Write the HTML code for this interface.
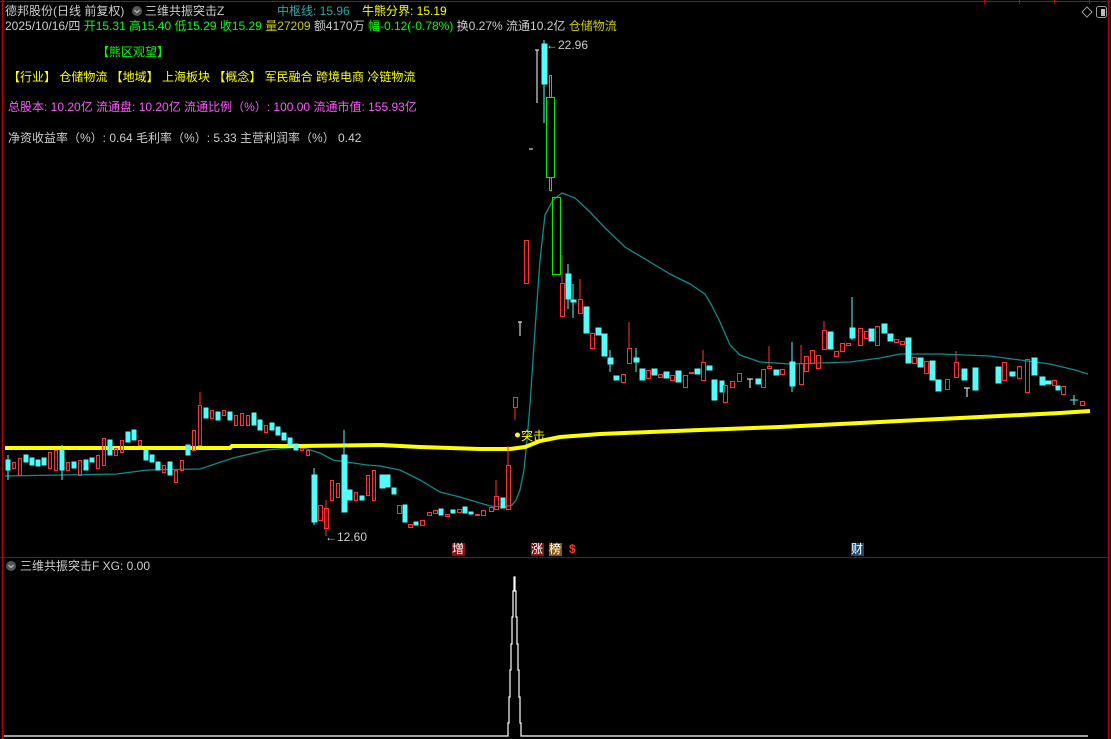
<!DOCTYPE html>
<html><head><meta charset="utf-8"><style>
html,body{margin:0;padding:0;background:#000;width:1111px;height:739px;overflow:hidden}
body{position:relative;font-family:"Liberation Sans","Noto Sans CJK SC",sans-serif;font-size:12px}
.t{position:absolute;white-space:nowrap;line-height:14px}
</style></head><body>
<svg width="1111" height="739" style="position:absolute;left:0;top:0">
<line x1="0" y1="1.5" x2="1111" y2="1.5" stroke="#c00000"/>
<line x1="2.5" y1="0" x2="2.5" y2="739" stroke="#c00000"/>
<line x1="1108.5" y1="0" x2="1108.5" y2="739" stroke="#c00000"/>
<line x1="0" y1="557.5" x2="1109" y2="557.5" stroke="#a00000"/>
<g stroke="#c00000"><line x1="984.5" y1="0" x2="984.5" y2="4"/><line x1="1019.5" y1="0" x2="1019.5" y2="4"/><line x1="1054.5" y1="0" x2="1054.5" y2="4"/><line x1="1089.5" y1="0" x2="1089.5" y2="4"/></g>
<path d="M1082 12 L1087 7 L1092 12 L1087 17 Z" fill="none" stroke="#999"/>
<rect x="1096.5" y="6.5" width="10" height="11" rx="2" fill="none" stroke="#999"/><rect x="1101" y="9" width="4" height="7" fill="#bbb"/>
<!-- MA line -->
<polyline fill="none" stroke="#0c8c8c" stroke-width="1.3" points="5,476 117,474 147,470 200,469 233,458 267,450 300,447 320,453 333,460 367,465 380,466 400,470 420,480 440,492 460,497 490,506 505,507 512,505 516,500 520,490 524,470 527,440 530,405 535,330 540,260 545,215 553,200 562,193 575,198 590,212 605,228 625,247 650,262 670,274 690,284 705,294 712,306 720,322 730,345 740,355 760,362 790,364 820,363 850,362 880,358 900,354 940,354 990,356 1020,360 1050,364 1075,370 1088,374"/>
<!-- yellow line -->
<polyline fill="none" stroke="#ffff00" stroke-width="4" points="5,448 230,448 232,446 300,446 380,445 420,447 480,449 510,449 525,447 540,441 560,437 600,434 650,432 700,430 780,427 860,423 960,418 1060,413 1090,411"/>
<g id="c" stroke-width="1">
<!-- cyan filled -->
<g fill="#54fcfc" stroke="#54fcfc">
<rect x="6" y="460" width="4" height="10"/><line x1="8" y1="455" x2="8" y2="480"/>
<rect x="24" y="455" width="4" height="7"/><rect x="30" y="458" width="4" height="7"/><rect x="36" y="460" width="4" height="6"/><rect x="42" y="458" width="4" height="7"/>
<rect x="60" y="450" width="4" height="20"/><line x1="62" y1="445" x2="62" y2="480"/>
<rect x="72" y="462" width="4" height="6"/><rect x="84" y="460" width="4" height="10"/><rect x="90" y="458" width="4" height="4"/>
<rect x="108" y="440" width="4" height="15"/><rect x="126" y="432" width="4" height="10"/><rect x="132" y="430" width="4" height="10"/>
<rect x="144" y="450" width="4" height="10"/><rect x="150" y="455" width="4" height="7"/><rect x="156" y="462" width="4" height="8"/>
<rect x="168" y="462" width="4" height="13"/><rect x="186" y="445" width="4" height="10"/>
<rect x="204" y="408" width="4" height="10"/><rect x="216" y="412" width="4" height="8"/><rect x="228" y="412" width="4" height="8"/>
<rect x="252" y="413" width="4" height="12"/><rect x="258" y="420" width="4" height="10"/><rect x="270" y="423" width="4" height="7"/>
<rect x="276" y="427" width="4" height="8"/><rect x="282" y="433" width="4" height="7"/><rect x="288" y="438" width="4" height="7"/><rect x="294" y="444" width="4" height="6"/>
<rect x="312" y="475" width="5" height="47"/><line x1="314" y1="468" x2="314" y2="525"/>
<rect x="342" y="455" width="5" height="57"/><line x1="344" y1="430" x2="344" y2="512"/>
<rect x="348" y="490" width="4" height="10"/><rect x="360" y="496" width="4" height="4"/>
<rect x="380" y="475" width="5" height="13"/><rect x="386" y="475" width="4" height="12"/><rect x="392" y="488" width="4" height="6"/>
<rect x="403" y="505" width="4" height="17"/><rect x="414" y="522" width="4" height="3"/><rect x="439" y="509" width="4" height="6"/>
<rect x="451" y="510" width="4" height="3"/><rect x="463" y="507" width="4" height="6"/><rect x="469" y="512" width="4" height="2"/><rect x="501" y="498" width="4" height="10"/>
<rect x="542" y="44" width="5" height="40"/><line x1="544" y1="40" x2="544" y2="123"/>
<rect x="566" y="274" width="5" height="25"/><line x1="568" y1="264" x2="568" y2="309"/>
<rect x="571" y="300" width="5" height="2"/><line x1="573" y1="284" x2="573" y2="318"/>
<rect x="584" y="307" width="5" height="26"/><rect x="596" y="328" width="5" height="7"/><rect x="602" y="334" width="5" height="22"/>
<rect x="608" y="358" width="5" height="6"/><line x1="610" y1="350" x2="610" y2="372"/><rect x="614" y="376" width="5" height="4"/>
<rect x="634" y="358" width="5" height="4"/><line x1="636" y1="348" x2="636" y2="372"/><rect x="640" y="369" width="5" height="11"/>
<rect x="652" y="369" width="5" height="6"/><rect x="664" y="372" width="5" height="6"/><rect x="676" y="371" width="5" height="11"/>
<rect x="695" y="369" width="5" height="5"/><rect x="707" y="366" width="5" height="4"/><rect x="712" y="380" width="5" height="20"/>
<rect x="720" y="381" width="4" height="11"/><rect x="756" y="379" width="5" height="5"/><rect x="774" y="370" width="5" height="5"/>
<rect x="790" y="362" width="5" height="24"/><line x1="792" y1="342" x2="792" y2="392"/>
<rect x="828" y="332" width="5" height="17"/><rect x="850" y="328" width="5" height="10"/><line x1="852" y1="297" x2="852" y2="340"/>
<rect x="869" y="329" width="5" height="12"/><rect x="882" y="324" width="5" height="9"/><rect x="888" y="334" width="5" height="7"/>
<rect x="906" y="338" width="5" height="25"/><rect x="918" y="358" width="5" height="9"/><rect x="930" y="361" width="5" height="19"/>
<rect x="936" y="380" width="5" height="11"/><rect x="962" y="369" width="5" height="11"/><rect x="973" y="368" width="5" height="22"/>
<rect x="996" y="367" width="5" height="16"/><rect x="1010" y="372" width="5" height="4"/><rect x="1032" y="358" width="5" height="17"/>
<rect x="1040" y="377" width="5" height="8"/><rect x="1046" y="381" width="5" height="3"/><rect x="1056" y="386" width="4" height="4"/>
<line x1="1070" y1="400" x2="1078" y2="400"/><line x1="1074" y1="395" x2="1074" y2="405"/>
</g>
<!-- red hollow -->
<g fill="none" stroke="#ff3232">
<rect x="12.5" y="462.5" width="3" height="6"/><rect x="18.5" y="458.5" width="3" height="17"/>
<rect x="48.5" y="452.5" width="3" height="16"/><rect x="54.5" y="450.5" width="3" height="20"/>
<rect x="66.5" y="462.5" width="3" height="8"/><rect x="78.5" y="460.5" width="3" height="15"/><rect x="96.5" y="455.5" width="3" height="13"/>
<rect x="102.5" y="438.5" width="3" height="27"/><rect x="114.5" y="448.5" width="3" height="7"/><rect x="120.5" y="440.5" width="3" height="12"/>
<rect x="138.5" y="440.5" width="3" height="5"/><rect x="162.5" y="465.5" width="3" height="7"/><rect x="174.5" y="470.5" width="3" height="12"/>
<rect x="180.5" y="460.5" width="3" height="10"/><rect x="192.5" y="430.5" width="3" height="20"/><rect x="198.5" y="405.5" width="3" height="40"/><line x1="200" y1="392" x2="200" y2="405"/>
<rect x="210.5" y="410.5" width="3" height="8"/><rect x="222.5" y="410.5" width="3" height="5"/><rect x="234.5" y="415.5" width="3" height="10"/>
<rect x="240.5" y="413.5" width="3" height="12"/><rect x="246.5" y="415.5" width="3" height="10"/><rect x="264.5" y="425.5" width="3" height="7"/>
<rect x="300.5" y="448.5" width="3" height="2"/><rect x="306.5" y="450.5" width="3" height="5"/>
<rect x="318.5" y="505.5" width="4" height="15"/><rect x="324.5" y="508.5" width="4" height="20"/><line x1="326" y1="500" x2="326" y2="536"/>
<rect x="330.5" y="480.5" width="3" height="20"/><rect x="336.5" y="483.5" width="3" height="14"/><rect x="354.5" y="492.5" width="3" height="8"/>
<rect x="366.5" y="475.5" width="3" height="20"/><rect x="372.5" y="470.5" width="3" height="30"/>
<rect x="397.5" y="505.5" width="4" height="8"/><rect x="408.5" y="524.5" width="4" height="3"/><rect x="420.5" y="520.5" width="4" height="5"/>
<rect x="427.5" y="512.5" width="4" height="3"/><rect x="433.5" y="510.5" width="4" height="3"/><rect x="445.5" y="514.5" width="4" height="2"/>
<rect x="457.5" y="509.5" width="4" height="3"/><rect x="475.5" y="514.5" width="4" height="1"/><rect x="481.5" y="510.5" width="4" height="5"/>
<rect x="489.5" y="507.5" width="4" height="4"/><rect x="494.5" y="496.5" width="4" height="13"/><line x1="496" y1="480" x2="496" y2="496"/>
<rect x="506.5" y="465.5" width="4" height="44"/><line x1="508" y1="446" x2="508" y2="465"/>
<rect x="513.5" y="397.5" width="4" height="10"/><line x1="515" y1="407" x2="515" y2="420"/>
<rect x="524.5" y="240.5" width="4" height="43"/>
<rect x="560.5" y="283.5" width="4" height="33"/><line x1="562" y1="255" x2="562" y2="283"/>
<rect x="578.5" y="299.5" width="4" height="14"/><line x1="580" y1="279" x2="580" y2="299"/>
<rect x="590.5" y="333.5" width="4" height="15"/><rect x="621.5" y="374.5" width="4" height="8"/>
<rect x="627.5" y="348.5" width="4" height="15"/><line x1="629" y1="322" x2="629" y2="348"/>
<rect x="646.5" y="370.5" width="4" height="8"/><rect x="658.5" y="374.5" width="4" height="3"/><rect x="670.5" y="375.5" width="4" height="5"/>
<rect x="683.5" y="375.5" width="4" height="12"/><rect x="689.5" y="372.5" width="4" height="1"/><rect x="701.5" y="362.5" width="4" height="18"/><line x1="703" y1="350" x2="703" y2="362"/>
<rect x="723.5" y="385.5" width="4" height="17"/><rect x="730.5" y="381.5" width="4" height="6"/><rect x="737.5" y="373.5" width="4" height="8"/>
<rect x="761.5" y="369.5" width="4" height="18"/><rect x="767.5" y="366.5" width="4" height="2"/><line x1="769" y1="346" x2="769" y2="366"/>
<rect x="780.5" y="369.5" width="4" height="5"/><rect x="799.5" y="363.5" width="4" height="21"/><line x1="801" y1="345" x2="801" y2="363"/>
<rect x="804.5" y="356.5" width="4" height="15"/><rect x="810.5" y="350.5" width="4" height="13"/><rect x="816.5" y="355.5" width="4" height="13"/>
<rect x="822.5" y="330.5" width="4" height="19"/><line x1="824" y1="321" x2="824" y2="330"/><rect x="834.5" y="351.5" width="4" height="5"/>
<rect x="840.5" y="343.5" width="4" height="8"/><rect x="846.5" y="343.5" width="4" height="2"/><rect x="858.5" y="328.5" width="4" height="17"/>
<rect x="864.5" y="331.5" width="4" height="7"/><rect x="875.5" y="326.5" width="4" height="19"/><rect x="894.5" y="339.5" width="4" height="3"/>
<rect x="900.5" y="341.5" width="4" height="3"/><rect x="912.5" y="357.5" width="4" height="6"/><rect x="924.5" y="361.5" width="4" height="12"/>
<rect x="945.5" y="379.5" width="4" height="10"/><rect x="954.5" y="362.5" width="4" height="15"/><line x1="956" y1="351" x2="956" y2="362"/>
<rect x="1002.5" y="362.5" width="4" height="18"/><rect x="1017.5" y="366.5" width="4" height="12"/><rect x="1025.5" y="359.5" width="4" height="33"/>
<rect x="1052.5" y="380.5" width="4" height="5"/><rect x="1061.5" y="386.5" width="4" height="8"/><rect x="1080.5" y="401.5" width="4" height="4"/>
</g>
<!-- green hollow -->
<g fill="none" stroke="#00ee00">
<rect x="546.5" y="97.5" width="8" height="80"/><rect x="549.5" y="75.5" width="2" height="22"/><rect x="549.5" y="177.5" width="2" height="13"/>
<rect x="552.5" y="197.5" width="8" height="77"/>
</g>
<g stroke="#fff">
<line x1="537" y1="50" x2="537" y2="103"/><line x1="535" y1="50" x2="539" y2="50"/><line x1="529" y1="149" x2="533" y2="149"/>
<line x1="520" y1="322" x2="520" y2="336"/><line x1="518" y1="322" x2="522" y2="322"/>
<line x1="750" y1="379" x2="750" y2="388"/><line x1="747" y1="379" x2="753" y2="379"/>
<line x1="967" y1="388" x2="967" y2="397"/><line x1="964" y1="388" x2="970" y2="388"/>
</g>
</g>
<!-- spike -->
<polyline fill="none" stroke="#fff" stroke-width="1.2" points="4,736 508,736 508,723 509,723 509,697 510,697 510,670 511,670 511,644 512,644 512,617 513,617 513,591 514,591 514,577 515,577 515,591 516,591 516,617 517,617 517,644 518,644 518,670 519,670 519,697 520,697 520,723 521,723 521,736 1088,736"/>
<circle cx="517.5" cy="435" r="2.5" fill="#ffff00"/>
<circle cx="11" cy="566" r="5" fill="#555"/><path d="M8.5 565 L11 567.5 L13.5 565" stroke="#bbb" fill="none" stroke-width="1.2"/>
<circle cx="137" cy="11" r="5" fill="#555"/><path d="M134.5 10 L137 12.5 L139.5 10" stroke="#bbb" fill="none" stroke-width="1.2"/>
<rect x="452" y="543" width="13" height="13" fill="#8a1010"/><rect x="531" y="543" width="13" height="13" fill="#8a1010"/>
<rect x="549" y="543" width="13" height="13" fill="#8a5a10"/><rect x="851" y="543" width="13" height="13" fill="#1a4a7a"/>
</svg>
<div class="t" style="left:5px;top:4px;color:#ccc">德邦股份(日线 前复权)</div>
<div class="t" style="left:145px;top:4px;color:#ccc">三维共振突击Z</div>
<div class="t" style="left:277px;top:4px;color:#2aa"><span>中枢线: 15.96</span></div>
<div class="t" style="left:362px;top:4px;color:#ffff00">牛熊分界: 15.19</div>
<div class="t" style="left:5px;top:19px;color:#ccc">2025/10/16/四 <span style="color:#0f0">开15.31 高15.40 低15.29 收15.29</span> <span style="color:#cc0">量27209</span> 额4170万 <span style="color:#0f0">幅-0.12(-0.78%)</span> 换0.27% 流通10.2亿 <span style="color:#cc0">仓储物流</span></div>
<div class="t" style="left:97px;top:45px;color:#0f0">【熊区观望】</div>
<div class="t" style="left:8px;top:70px;color:#ffff00">【行业】 仓储物流 【地域】 上海板块 【概念】 军民融合 跨境电商 冷链物流</div>
<div class="t" style="left:8px;top:100px;color:#ff55ff">总股本: 10.20亿 流通盘: 10.20亿 流通比例（%）: 100.00 流通市值: 155.93亿</div>
<div class="t" style="left:8px;top:131px;color:#ccc">净资收益率（%）: 0.64 毛利率（%）: 5.33 主营利润率（%） 0.42</div>
<div class="t" style="left:546px;top:38px;color:#ccc">←22.96</div>
<div class="t" style="left:325px;top:530px;color:#ccc">←12.60</div>
<div class="t" style="left:521px;top:429px;color:#ffff00">突击</div>
<div class="t" style="left:452px;top:542px;color:#fff">增</div>
<div class="t" style="left:531px;top:542px;color:#fff">涨</div>
<div class="t" style="left:549px;top:542px;color:#fff">榜</div>
<div class="t" style="left:569px;top:542px;color:#f33;font-weight:bold">$</div>
<div class="t" style="left:851px;top:542px;color:#fff">财</div>
<div class="t" style="left:20px;top:559px;color:#ccc">三维共振突击F XG: 0.00</div>
</body></html>
